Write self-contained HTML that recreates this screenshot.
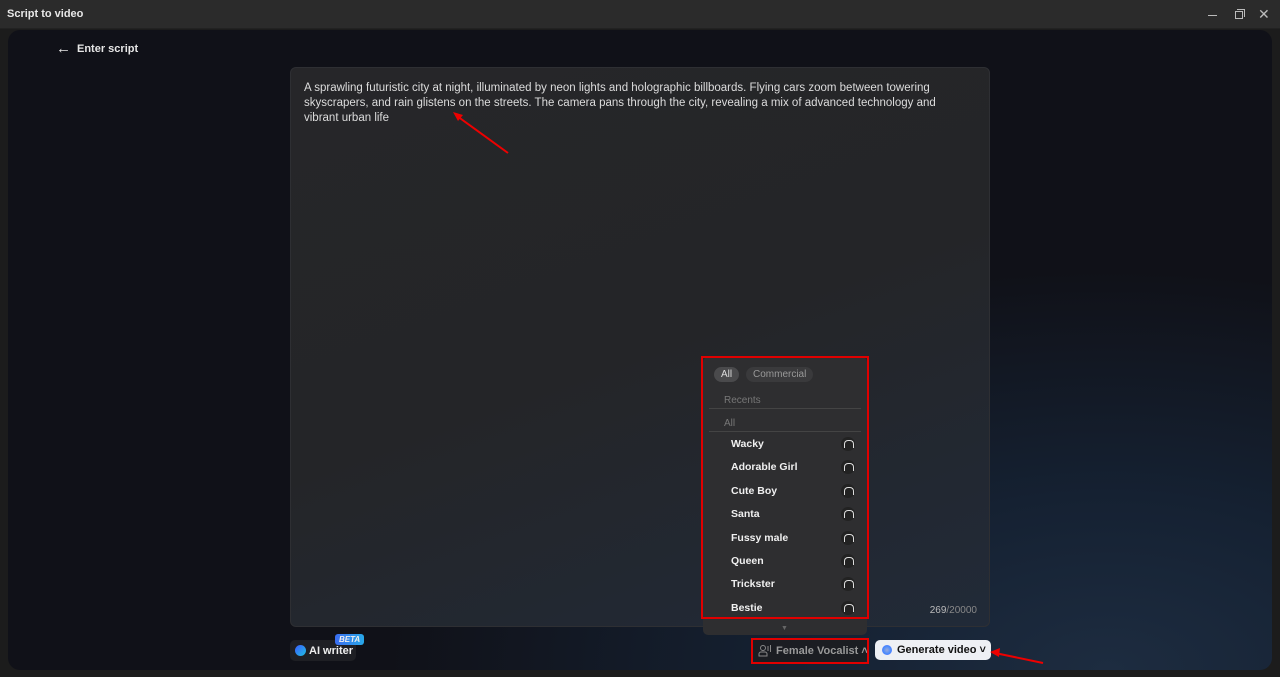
<!DOCTYPE html>
<html><head><meta charset="utf-8"><style>
*{margin:0;padding:0;box-sizing:border-box}
body{width:1280px;height:677px;background:#1c1c1c;font-family:"Liberation Sans",sans-serif;position:relative;overflow:hidden;color:#fff}
.title{position:absolute;left:0;top:0;width:1280px;height:29px;background:#2b2b2b;border-bottom:1px solid #222}
.title span{position:absolute;left:7px;top:8px;font-size:11px;font-weight:bold;color:#e8e8e8}
.main{position:absolute;left:8px;top:30px;width:1264px;height:640px;border-radius:12px;background:radial-gradient(ellipse 900px 500px at 1100px 640px,#1d2c40 0%,#152132 35%,#101118 80%),#101116;overflow:hidden}
.back{position:absolute;left:48px;top:9px;font-size:11px;font-weight:bold;color:#e6e6e6}
.ta{position:absolute;left:282px;top:37px;width:700px;height:560px;border-radius:6px;background:linear-gradient(160deg,#262629 0%,#242528 50%,#212a38 100%);border:1px solid #2e2f33}
.ta p{position:absolute;left:13px;top:13px;font-size:11.5px;line-height:15px;color:#dcdcdc;white-space:nowrap}
.cnt{position:absolute;right:12px;bottom:10px;font-size:10px;color:#888}
.cnt b{font-weight:normal;color:#bbb}
.dd{position:absolute;left:703px;top:357px;width:164px;height:278px;background:#2e2e30;border-radius:5px}
.red{position:absolute;border:2px solid #e00000}
.pill{position:absolute;top:10px;height:15px;border-radius:8px;background:#3a3a3c;font-size:10px;line-height:15px;padding:0 7px;color:#999}
.sec{position:absolute;left:21px;font-size:10px;color:#777}
.ln{position:absolute;left:6px;width:152px;height:1px;background:#444}
.it{position:absolute;left:28px;font-size:10.5px;font-weight:bold;color:#f0f0f0}
.hp{position:absolute;left:138px;width:14px;height:14px;border-radius:50%;background:#222}
.hp:after{content:"";position:absolute;left:3px;top:3px;width:8px;height:7px;border:1.5px solid #ddd;border-bottom:none;border-radius:4px 4px 0 0}
.btn{position:absolute;border-radius:5px;font-size:11px;font-weight:bold}
</style></head><body>
<div class="title"><span>Script to video</span>
<div style="position:absolute;left:1208px;top:15px;width:9px;height:1px;background:#bbb"></div>
<div style="position:absolute;left:1235px;top:11px;width:8px;height:8px;border:1px solid #bbb"></div>
<div style="position:absolute;left:1237px;top:9px;width:8px;height:8px;border-top:1px solid #bbb;border-right:1px solid #bbb"></div>
<div style="position:absolute;left:1258px;top:6px;font-size:14px;color:#bbb">✕</div>
</div>
<div class="main">
<div class="back"><span style="font-size:15px;position:relative;top:1px;margin-right:6px">←</span>Enter script</div>
<div class="ta"><p>A sprawling futuristic city at night, illuminated by neon lights and holographic billboards. Flying cars zoom between towering<br>skyscrapers, and rain glistens on the streets. The camera pans through the city, revealing a mix of advanced technology and<br>vibrant urban life</p>
<div class="cnt"><b>269</b>/20000</div></div>
<svg style="position:absolute;left:445px;top:82px" width="60" height="45"><line x1="55" y1="41" x2="4" y2="4" stroke="#e00" stroke-width="2"/><polygon points="0,0 10,3 5,9" fill="#e00"/></svg>
<div class="btn" style="left:282px;top:610px;width:66px;height:21px;background:#1e1f24;color:#eee;padding:5px 0 0 19px">AI writer
<div style="position:absolute;left:5px;top:5px;width:11px;height:11px;border-radius:50%;background:linear-gradient(135deg,#3a5cff,#20c0e0)"></div>
<div style="position:absolute;left:45px;top:-6px;font-size:8px;font-style:italic;background:linear-gradient(90deg,#3a6cf0,#28a8e8);padding:1px 4px;border-radius:3px">BETA</div></div>
<div class="btn" style="left:744px;top:608px;width:116px;height:24px;background:#1b1d22;color:#999;padding:7px 0 0 24px">Female Vocalist ˄
<svg style="position:absolute;left:6px;top:6px" width="14" height="13"><circle cx="5" cy="4" r="2.5" fill="none" stroke="#888"/><path d="M1 12v-2a2 2 0 0 1 2-2h4a2 2 0 0 1 2 2v2z" fill="none" stroke="#888"/><path d="M10 2v5M12.5 1v7" stroke="#888"/></svg></div>
<div class="btn" style="left:867px;top:610px;width:116px;height:20px;background:#eef0f4;color:#111;padding:4px 0 0 22px">Generate video ˅
<div style="position:absolute;left:7px;top:5px;width:10px;height:10px;border-radius:50%;background:radial-gradient(circle,#9ad 0,#48f 60%,#a6f 100%)"></div></div>
<svg style="position:absolute;left:982px;top:618px" width="56" height="20"><line x1="53" y1="15" x2="5" y2="5" stroke="#e00" stroke-width="2"/><polygon points="0,4 10,0 9,9" fill="#e00"/></svg>
</div>
<div class="dd">
<div class="pill" style="left:11px;color:#ddd;background:#4a4a4c">All</div>
<div class="pill" style="left:43px">Commercial</div>
<div class="sec" style="top:38px">Recents</div><div class="ln" style="top:51px"></div>
<div class="sec" style="top:61px">All</div><div class="ln" style="top:74px"></div>
<div class="it" style="top:81px">Wacky</div><div class="hp" style="top:80px"></div>
<div class="it" style="top:104px">Adorable Girl</div><div class="hp" style="top:103px"></div>
<div class="it" style="top:128px">Cute Boy</div><div class="hp" style="top:127px"></div>
<div class="it" style="top:151px">Santa</div><div class="hp" style="top:150px"></div>
<div class="it" style="top:175px">Fussy male</div><div class="hp" style="top:174px"></div>
<div class="it" style="top:198px">Queen</div><div class="hp" style="top:197px"></div>
<div class="it" style="top:221px">Trickster</div><div class="hp" style="top:220px"></div>
<div class="it" style="top:245px">Bestie</div><div class="hp" style="top:244px"></div>
<div style="position:absolute;left:78px;top:268px;font-size:7px;color:#666">▼</div>
</div>
<div class="red" style="left:701px;top:356px;width:168px;height:263px"></div>
<div class="red" style="left:751px;top:638px;width:118px;height:26px"></div>
</body></html>
